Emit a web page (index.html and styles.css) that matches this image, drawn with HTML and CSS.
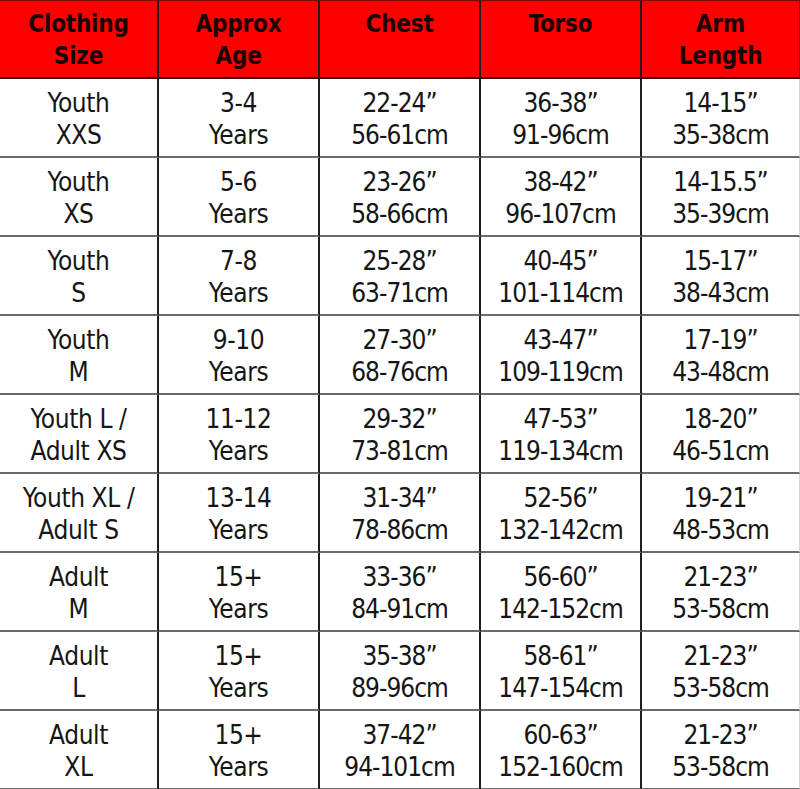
FILE: index.html
```html
<!DOCTYPE html>
<html>
<head>
<meta charset="utf-8">
<link rel="stylesheet" href="styles.css">
</head>
<body>
<div class="chart">
  <div class="cell head">Clothing<br>Size</div>
  <div class="cell head">Approx<br>Age</div>
  <div class="cell head">Chest</div>
  <div class="cell head">Torso</div>
  <div class="cell head last">Arm<br>Length</div>

  <div class="cell">Youth<br>XXS</div>
  <div class="cell">3-4<br>Years</div>
  <div class="cell num">22-24”<br>56-61cm</div>
  <div class="cell num">36-38”<br>91-96cm</div>
  <div class="cell num last">14-15”<br>35-38cm</div>

  <div class="cell">Youth<br>XS</div>
  <div class="cell">5-6<br>Years</div>
  <div class="cell num">23-26”<br>58-66cm</div>
  <div class="cell num">38-42”<br>96-107cm</div>
  <div class="cell num last">14-15.5”<br>35-39cm</div>

  <div class="cell">Youth<br>S</div>
  <div class="cell">7-8<br>Years</div>
  <div class="cell num">25-28”<br>63-71cm</div>
  <div class="cell num">40-45”<br>101-114cm</div>
  <div class="cell num last">15-17”<br>38-43cm</div>

  <div class="cell">Youth<br>M</div>
  <div class="cell">9-10<br>Years</div>
  <div class="cell num">27-30”<br>68-76cm</div>
  <div class="cell num">43-47”<br>109-119cm</div>
  <div class="cell num last">17-19”<br>43-48cm</div>

  <div class="cell">Youth L /<br>Adult XS</div>
  <div class="cell">11-12<br>Years</div>
  <div class="cell num">29-32”<br>73-81cm</div>
  <div class="cell num">47-53”<br>119-134cm</div>
  <div class="cell num last">18-20”<br>46-51cm</div>

  <div class="cell">Youth XL /<br>Adult S</div>
  <div class="cell">13-14<br>Years</div>
  <div class="cell num">31-34”<br>78-86cm</div>
  <div class="cell num">52-56”<br>132-142cm</div>
  <div class="cell num last">19-21”<br>48-53cm</div>

  <div class="cell">Adult<br>M</div>
  <div class="cell">15+<br>Years</div>
  <div class="cell num">33-36”<br>84-91cm</div>
  <div class="cell num">56-60”<br>142-152cm</div>
  <div class="cell num last">21-23”<br>53-58cm</div>

  <div class="cell">Adult<br>L</div>
  <div class="cell">15+<br>Years</div>
  <div class="cell num">35-38”<br>89-96cm</div>
  <div class="cell num">58-61”<br>147-154cm</div>
  <div class="cell num last">21-23”<br>53-58cm</div>

  <div class="cell">Adult<br>XL</div>
  <div class="cell">15+<br>Years</div>
  <div class="cell num">37-42”<br>94-101cm</div>
  <div class="cell num">60-63”<br>152-160cm</div>
  <div class="cell num last">21-23”<br>53-58cm</div>
</div>
</body>
</html>
```

FILE: styles.css
```css
html, body {
  margin: 0;
  padding: 0;
  background: #ffffff;
}

.chart {
  width: 800px;
  display: grid;
  grid-template-columns: 159px 161px 161px 161px 158px;
  grid-template-rows: 78px repeat(9, 79px);
  border-top: 1px solid #7a0a0a;
  font-family: "DejaVu Sans Condensed", "Liberation Sans Narrow", "DejaVu Sans", sans-serif;
  color: #151515;
}

.cell {
  box-sizing: border-box;
  border-right: 2px solid #1e1e1e;
  border-bottom: 2px solid #6a6a6a;
  display: flex;
  flex-direction: column;
  align-items: center;
  justify-content: center;
  text-align: center;
  font-size: 26px;
  line-height: 32px;
  letter-spacing: -0.4px;
  padding-top: 3px;
}

.cell.num {
  letter-spacing: -1px;
}

.cell.last {
  border-right: 1px solid #d8d8d8;
}

.head {
  background: #fe0000;
  color: #1c0404;
  font-weight: bold;
  font-size: 24px;
  line-height: 32px;
  justify-content: flex-start;
  padding-top: 7px;
  border-bottom: 2px solid #3a1010;
  letter-spacing: -0.2px;
}

.head.last {
  border-right: 1px solid #7a0a0a;
}
```
